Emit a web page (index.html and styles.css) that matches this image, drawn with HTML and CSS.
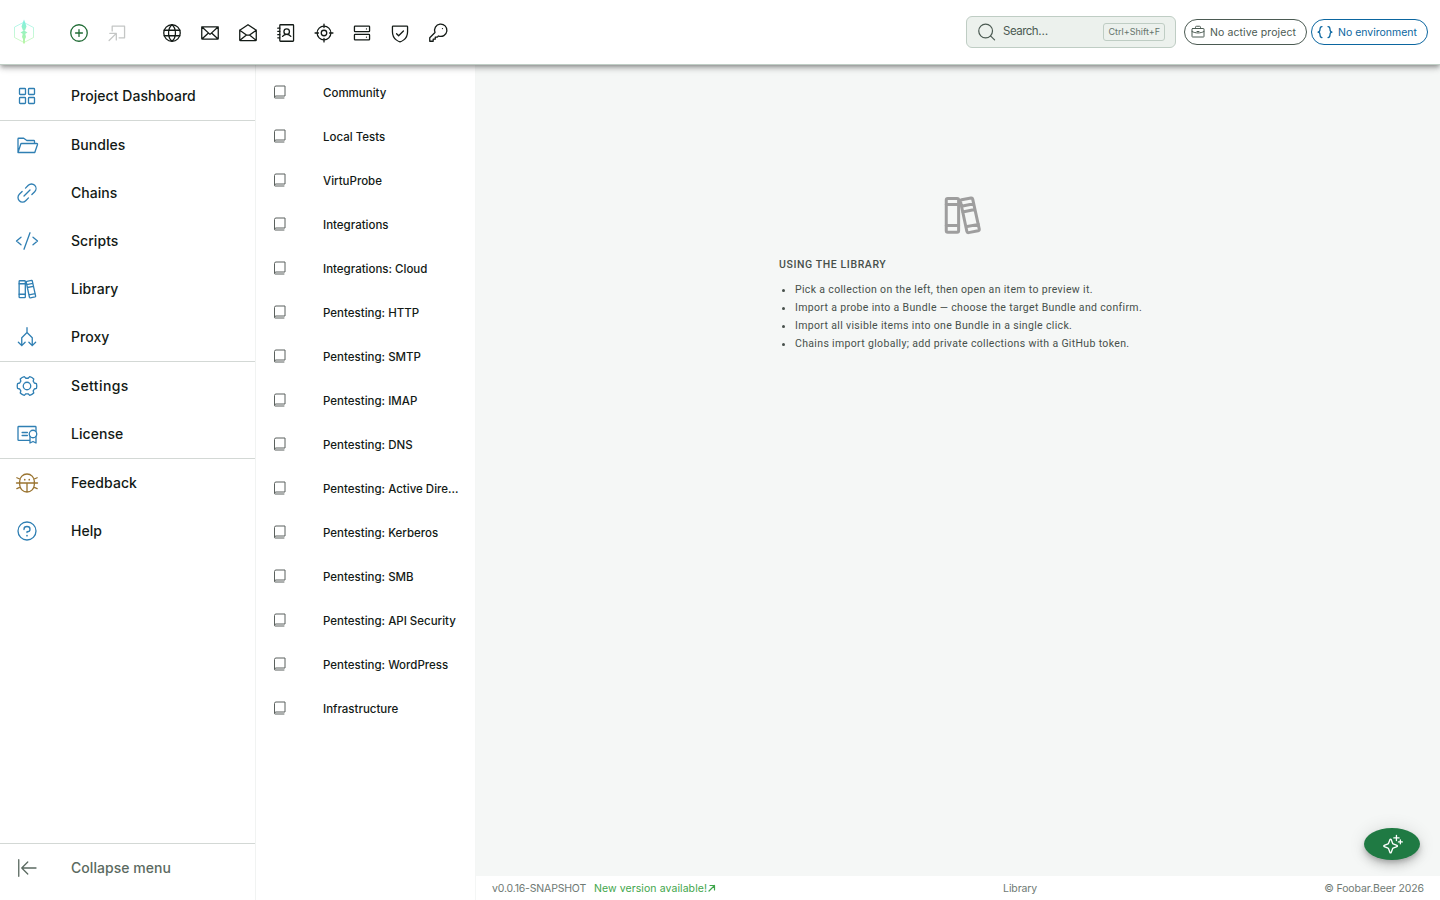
FILE: index.html
```html
<!DOCTYPE html>
<html lang="en">
<head>
  <meta charset="UTF-8" />
  <meta name="viewport" content="width=device-width, initial-scale=1.0" />
  <title>Library</title>
  <link rel="stylesheet" href="styles.css">
</head>
<body>
  <!-- shared symbols -->
  <svg class="defs" width="0" height="0">
    <symbol id="book" viewBox="0 0 256 256">
      <path d="M40,208V56A24,24,0,0,1,64,32H208V192H64a24,24,0,0,0-24,24a8,8,0,0,0,8,8H192"/>
    </symbol>
    <symbol id="books" viewBox="0 0 256 256">
      <rect x="44" y="40" width="66" height="180" rx="8"/>
      <path d="M44,72h66M44,184h66"/>
      <path d="M126,47l50-10a8,8,0,0,1,9,6l35,160a8,8,0,0,1-6,9l-51,10a8,8,0,0,1-9-6L120,56a8,8,0,0,1,6-9ZM125,81l65-13M131,112l65-13M148,191l68-13"/>
    </symbol>
  </svg>

  <header class="topbar">
    <svg class="logo" viewBox="0 0 24 28">
      <defs>
        <linearGradient id="lg" x1="0" y1="0" x2="0" y2="1">
          <stop offset="0" stop-color="#7ff0e4"/>
          <stop offset="1" stop-color="#b4f59c"/>
        </linearGradient>
      </defs>
      <path class="hex" d="M12 4.500L21.500 9.500v10L12 24.500L2.500 19.500V9.500Z"/>
      <path class="blade" d="M12 1.500l1.500 4 1 3-1.500 4h-2l-1.500-4 1-3ZM8.500 14.500l3.500-2 3.500 2-2.500 1.500h-2ZM10.700 16h2.600l.7 3-1 2-.2 4-.8 1-.8-1-.2-4-1-2Z"/>
    </svg>
    <div class="actions">
      <svg class="icon green" viewBox="0 0 256 256"><circle cx="128" cy="128" r="96"/><path d="M88,128h80M128,88v80"/></svg>
      <svg class="icon muted" viewBox="0 0 256 256"><path d="M72,104V48H216V184H152M44,132h76v76M120,132L36,216"/></svg>
    </div>
    <div class="tools">
      <svg class="icon" viewBox="0 0 256 256"><circle cx="128" cy="128" r="96"/><path d="M168,128c0,64-40,96-40,96s-40-32-40-96,40-96,40-96,40,32,40,96ZM37,96H219M37,160H219"/></svg>
      <svg class="icon" viewBox="0 0 256 256"><path d="M32,56H224V192a8,8,0,0,1-8,8H40a8,8,0,0,1-8-8ZM110,128L34,198M222,198l-76-70M224,56l-96,88L32,56"/></svg>
      <svg class="icon" viewBox="0 0 256 256"><path d="M32,96V208a8,8,0,0,0,8,8H216a8,8,0,0,0,8-8V96L128,32ZM110,152L34,213M146,152l76,61M224,96l-78,56H110L32,96"/></svg>
      <svg class="icon" viewBox="0 0 256 256"><rect x="56" y="32" width="160" height="192" rx="8"/><circle cx="136" cy="112" r="32"/><path d="M32,72H56M32,108H56M32,148H56M32,184H56M88,168a60,60,0,0,1,96,0"/></svg>
      <svg class="icon" viewBox="0 0 256 256"><circle cx="128" cy="128" r="80"/><circle cx="128" cy="128" r="32"/><path d="M128,24V64M128,192v40M24,128H64M192,128h40"/></svg>
      <svg class="icon" viewBox="0 0 256 256"><rect x="40" y="144" width="176" height="64" rx="8"/><rect x="40" y="48" width="176" height="64" rx="8"/><path d="M180,80h.1M180,176h.1"/></svg>
      <svg class="icon" viewBox="0 0 256 256"><path d="M216,112V56a8,8,0,0,0-8-8H48a8,8,0,0,0-8,8v56c0,96,88,120,88,120S216,208,216,112ZM88,136l24,24,56-56"/></svg>
      <svg class="icon" viewBox="0 0 256 256"><path d="M93.200,122.800a72,72,0,1,1,40,40L120,176H96v24H72v24H32V184ZM180,76h.1"/></svg>
    </div>

    <div class="search">
      <svg class="icon" viewBox="0 0 256 256"><circle cx="112" cy="116" r="80"/><path d="M169,173l47,47"/></svg>
      <span class="placeholder">Search…</span>
      <kbd>Ctrl+Shift+F</kbd>
    </div>
    <div class="chip project">
      <svg class="icon" viewBox="0 0 256 256"><rect x="32" y="72" width="192" height="136" rx="8"/><path d="M88,72V52a16,16,0,0,1,16-16h48a16,16,0,0,1,16,16V72M32,120c60,32,132,32,192,0M112,120h32"/></svg>
      <span>No active project</span>
    </div>
    <div class="chip env">
      <svg class="icon" viewBox="0 0 256 256"><path d="M80,40c-64,0,0,88-64,88,64,0,0,88,64,88M176,40c64,0,0,88,64,88-64,0,0,88-64,88"/></svg>
      <span>No environment</span>
    </div>
  </header>

  <div class="layout">
    <nav class="sidebar">
      <a class="item"><svg class="icon" viewBox="0 0 256 256"><rect x="48" y="48" width="64" height="64" rx="8"/><rect x="144" y="48" width="64" height="64" rx="8"/><rect x="48" y="144" width="64" height="64" rx="8"/><rect x="144" y="144" width="64" height="64" rx="8"/></svg><span>Project Dashboard</span></a>
      <hr>
      <a class="item"><svg class="icon" viewBox="0 0 256 256"><path d="M32,208V64a8,8,0,0,1,8-8H93l33,24h74a8,8,0,0,1,8,8v24M32,208l30-90a8,8,0,0,1,8-6H232a8,8,0,0,1,8,10l-29,86Z"/></svg><span>Bundles</span></a>
      <a class="item"><svg class="icon" viewBox="0 0 256 256"><path d="M96,160l64-64M112,76l30-30a48,48,0,0,1,68,68l-30,30M76,112l-30,30a48,48,0,0,0,68,68l30-30"/></svg><span>Chains</span></a>
      <a class="item"><svg class="icon" viewBox="0 0 256 256"><path d="M64,88L16,128l48,40M192,88l48,40-48,40M160,40L96,216"/></svg><span>Scripts</span></a>
      <a class="item"><svg class="icon"><use href="#books"/></svg><span>Library</span></a>
      <a class="item"><svg class="icon" viewBox="0 0 256 256"><path d="M128,28V80M72,220V136l56-56,56,56v84M36,184l36,36,36-36M148,184l36,36,36-36"/></svg><span>Proxy</span></a>
      <hr>
      <a class="item"><svg class="icon" viewBox="0 0 256 256"><circle cx="128" cy="128" r="40"/><path d="M229,103Q236,128,229,153L206,160L194,180L200,203Q182,222,157,228L140,211H116L99,228Q74,222,56,203L62,180L50,160L27,153Q20,128,27,103L50,96L62,76L56,53Q74,34,99,28L116,45H140L157,28Q182,34,200,53L194,76L206,96Z"/></svg><span class="settings">Settings</span></a>
      <a class="item"><svg class="icon" viewBox="0 0 256 256"><circle cx="192" cy="128" r="40"/><path d="M160,196H40a8,8,0,0,1-8-8V56a8,8,0,0,1,8-8H216a8,8,0,0,1,8,8V100M160,154v70l32-16,32,16V154M76,112h56M76,144h56"/></svg><span>License</span></a>
      <hr>
      <a class="item bug"><svg class="icon" viewBox="0 0 256 256"><path d="M50,110a78,78,0,0,1,156,0v36a78,78,0,0,1-156,0ZM16,128H240M128,128v96M20,72l36,16M236,72l-36,16M20,188l36-16M236,188l-36-16"/><path class="dots" d="M104,92h.1M152,92h.1"/></svg><span>Feedback</span></a>
      <a class="item"><svg class="icon" viewBox="0 0 256 256"><circle cx="128" cy="128" r="96"/><path d="M128,144v-8c18,0,32-13,32-28s-14-28-32-28-32,13-32,28v4"/><path class="dots" d="M128,178h.1"/></svg><span>Help</span></a>
      <div class="bottom">
        <hr>
        <a class="item collapse"><svg class="icon" viewBox="0 0 256 256"><path d="M40,40V216M224,128H72M136,64l-64,64,64,64"/></svg><span>Collapse menu</span></a>
      </div>
    </nav>

    <aside class="collections">
      <a class="entry"><svg><use href="#book"/></svg><span>Community</span></a>
      <a class="entry"><svg><use href="#book"/></svg><span>Local Tests</span></a>
      <a class="entry"><svg><use href="#book"/></svg><span>VirtuProbe</span></a>
      <a class="entry"><svg><use href="#book"/></svg><span>Integrations</span></a>
      <a class="entry"><svg><use href="#book"/></svg><span>Integrations: Cloud</span></a>
      <a class="entry"><svg><use href="#book"/></svg><span>Pentesting: HTTP</span></a>
      <a class="entry"><svg><use href="#book"/></svg><span>Pentesting: SMTP</span></a>
      <a class="entry"><svg><use href="#book"/></svg><span>Pentesting: IMAP</span></a>
      <a class="entry"><svg><use href="#book"/></svg><span>Pentesting: DNS</span></a>
      <a class="entry"><svg><use href="#book"/></svg><span>Pentesting: Active Dire…</span></a>
      <a class="entry"><svg><use href="#book"/></svg><span>Pentesting: Kerberos</span></a>
      <a class="entry"><svg><use href="#book"/></svg><span>Pentesting: SMB</span></a>
      <a class="entry"><svg><use href="#book"/></svg><span>Pentesting: API Security</span></a>
      <a class="entry"><svg><use href="#book"/></svg><span>Pentesting: WordPress</span></a>
      <a class="entry"><svg><use href="#book"/></svg><span>Infrastructure</span></a>
    </aside>

    <div class="content">
      <main>
        <svg class="hero"><use href="#books"/></svg>
        <div class="help">
          <h2>Using the library</h2>
          <ul>
            <li>Pick a collection on the left, then open an item to preview it.</li>
            <li>Import a probe into a Bundle — choose the target Bundle and confirm.</li>
            <li>Import all visible items into one Bundle in a single click.</li>
            <li>Chains import globally; add private collections with a GitHub token.</li>
          </ul>
        </div>
      </main>
      <footer>
        <div class="left"><span class="version">v0.0.16-SNAPSHOT</span><a class="update">New version available!<svg viewBox="0 0 8 8"><path d="M1 7L6.500 1.500M2 1.500h4.500V6"/></svg></a></div>
        <span class="page">Library</span>
        <span class="copy">© Foobar.Beer 2026</span>
      </footer>
    </div>
  </div>

  <button class="fab">
    <svg class="icon" viewBox="0 0 256 256"><path d="M138,160l-31,11a8,8,0,0,0-5,5L84,226a8,8,0,0,1-15,0L51,176a8,8,0,0,0-5,-5L-1,153a8,8,0,0,1,0-15l47-18a8,8,0,0,0,5-5L69,67a8,8,0,0,1,15,0l18,48a8,8,0,0,0,5,5l48,18a8,8,0,0,1,0,15Z" transform="translate(28 0)"/><path d="M176,16V80M144,48h64M224,72v48M200,96h48"/></svg>
  </button>
</body>
</html>
```
FILE: styles.css
```css
* {
  box-sizing: border-box;
}

body {
  margin: 0;
  height: 100vh;
  display: flex;
  flex-direction: column;
  overflow: hidden;
  background: #fff;
  color: #131a16;
  font-family: Inter, "Liberation Sans", sans-serif;
}

svg {
  flex: none;
  fill: none;
  stroke: currentColor;
  stroke-width: 16;
  stroke-linecap: round;
  stroke-linejoin: round;
}

.defs {
  position: absolute;
}

.topbar {
  position: relative;
  z-index: 2;
  height: 65px;
  flex: none;
  display: flex;
  align-items: center;
  padding: 0 12px;
  background: #fff;
  border-bottom: 1px solid #c0cec5;
  box-shadow: 0 2px 4px -1px rgba(0, 0, 0, 0.3), 0 4px 5px rgba(0, 0, 0, 0.14), 0 1px 10px rgba(0, 0, 0, 0.12);
}

.logo {
  width: 24px;
  height: 28px;
}

.hex {
  stroke: url(#lg);
  stroke-width: 0.6;
}

.blade {
  fill: url(#lg);
  stroke: none;
}

.topbar .icon {
  width: 22px;
  height: 22px;
}

.actions,
.tools {
  display: flex;
  gap: 16px;
  padding-top: 1px;
}

.actions .icon,
.tools .icon {
  stroke-width: 15;
}

.actions {
  margin-left: 32px;
}

.tools {
  margin-left: 33px;
}

.green {
  color: #1f6b34;
}

.muted {
  color: #c4c6c5;
}

.search {
  width: 210px;
  height: 32px;
  margin-left: auto;
  margin-right: 8px;
  display: flex;
  align-items: center;
  padding: 0 10px 0 9px;
  border: 1px solid #bfcdc4;
  border-radius: 6px;
  background: #ecf1ed;
  color: #4b5a52;
}

.search .icon {
  stroke-width: 14;
}

.placeholder {
  margin-left: 5px;
  padding-bottom: 2px;
  flex: 1;
  font-size: 11.500px;
  letter-spacing: -0.5px;
}

kbd {
  height: 18px;
  padding: 0 4px;
  border: 1px solid #bfcdc4;
  border-radius: 3px;
  font: 9px/16px Inter, sans-serif;
  color: #66756c;
}

.chip {
  height: 26px;
  display: flex;
  align-items: center;
  border: 1px solid currentColor;
  border-radius: 13px;
  font-size: 10.500px;
  color: #4b5a52;
}

.topbar .chip .icon {
  width: 16px;
  height: 16px;
}

.project {
  width: 123px;
  margin-right: 4px;
  padding-left: 5px;
  gap: 4px;
  letter-spacing: 0.1px;
}

.env {
  width: 117px;
  padding-left: 5px;
  gap: 5px;
  color: #0b66a0;
}

.env .icon {
  stroke-width: 20;
}

.layout {
  flex: 1;
  display: flex;
  min-height: 0;
}

.sidebar {
  width: 256px;
  display: flex;
  flex-direction: column;
  padding: 7px 0 8px;
  border-right: 1px solid #f1f3f2;
}

.sidebar hr {
  width: 100%;
  margin: 0;
  border: 0;
  border-top: 1px solid #d3d8d5;
}

.item {
  height: 48px;
  display: flex;
  align-items: center;
  padding-left: 15px;
  gap: 32px;
  font-size: 14px;
  font-weight: 500;
  letter-spacing: 0.05px;
}

.item span {
  padding-bottom: 2px;
}

.item .settings {
  letter-spacing: 0.4px;
}

.item .icon {
  width: 24px;
  height: 24px;
  color: #2f7fb3;
  stroke-width: 14;
}

.item .dots {
  stroke-width: 18;
}

.item.bug .icon {
  color: #9a7430;
}

.bottom {
  margin-top: auto;
}

.item.collapse,
.item.collapse .icon {
  color: #5b6a61;
}

.collections {
  width: 220px;
  padding-top: 5px;
  border-right: 1px solid #f4f6f5;
}

.entry {
  height: 44px;
  display: flex;
  align-items: center;
  padding-left: 16px;
  gap: 35px;
  font-size: 11.500px;
  font-weight: 500;
}

.entry span {
  padding-top: 1px;
}

.entry svg {
  width: 16px;
  height: 16px;
  color: #5b615e;
}

.content {
  flex: 1;
  display: flex;
  flex-direction: column;
}

main {
  flex: 1;
  display: flex;
  flex-direction: column;
  align-items: center;
  padding: 126px 0 0 8px;
  background: #f5f7f6;
}

.hero {
  width: 48px;
  height: 48px;
  color: #9e9e9e;
}

.help {
  width: 366px;
  margin-top: 17px;
  color: #47504b;
  font: 10.500px/18px Roboto, sans-serif;
  letter-spacing: 0.34px;
}

h2 {
  margin: 0 0 7px;
  font-size: 10.500px;
  line-height: 18px;
  font-weight: 500;
  letter-spacing: 0.6px;
  text-transform: uppercase;
}

ul {
  margin: 0;
  padding-left: 16px;
  white-space: nowrap;
}

footer {
  height: 24px;
  display: flex;
  justify-content: space-between;
  align-items: center;
  padding: 0 16px;
  font-size: 10.500px;
  color: #6f7a74;
}

.left {
  display: flex;
  gap: 8px;
}

.version {
  letter-spacing: -0.17px;
}

.update {
  color: #3fa64b;
  letter-spacing: 0.08px;
}

.update svg {
  width: 8px;
  height: 8px;
  margin-left: 1px;
  stroke-width: 1.200;
}

.page,
.copy {
  letter-spacing: -0.1px;
}

.fab {
  position: absolute;
  z-index: 3;
  right: 20px;
  bottom: 40px;
  width: 56px;
  height: 32px;
  display: flex;
  align-items: center;
  justify-content: center;
  padding: 0;
  border: 0;
  border-radius: 50%;
  background: #1f7a43;
  color: #fff;
  box-shadow: 0 3px 5px -1px rgba(0, 0, 0, 0.2), 0 6px 10px rgba(0, 0, 0, 0.14), 0 1px 18px rgba(0, 0, 0, 0.12);
}

.fab .icon {
  width: 21px;
  height: 21px;
}
```
